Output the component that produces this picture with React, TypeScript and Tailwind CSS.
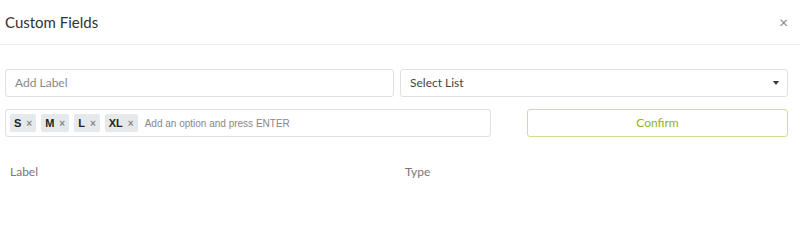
import React from "react";

const Chip = ({ label }: { label: string }) => (
  <span
    className="flex h-[18px] items-center gap-[5px] rounded-[2px] bg-[#e6e9ec] px-[4px] text-[11px] font-bold text-[#222]"
    style={{ fontFamily: "'Liberation Sans', Arial, sans-serif" }}
  >
    <span>{label}</span>
    <span className="text-[10px] font-bold text-[#888]">×</span>
  </span>
);

export default function App() {
  return (
    <div className="h-[200px] w-[800px] bg-white" style={{ fontFamily: "Lato, 'Liberation Sans', sans-serif" }}>
      <div className="flex h-[45px] items-center justify-between border-b border-[#eeeeee] pl-[5px] pr-[12px]">
        <span className="text-[15px] text-[#333]">Custom Fields</span>
        <span className="text-[15px] leading-none text-[#888]">×</span>
      </div>
      <div className="pl-[5px] pr-[12px] pt-[24px]">
        <div className="flex gap-[6px]">
          <div className="flex h-[28px] flex-1 items-center rounded-[3px] border border-[#e0e0e0] px-[9px] text-[12px] text-[#888]">
            Add Label
          </div>
          <div className="flex h-[28px] flex-1 items-center justify-between rounded-[3px] border border-[#e0e0e0] pl-[9px] pr-[8px] text-[12px] text-[#444]">
            <span>Select List</span>
            <svg width="6" height="4" viewBox="0 0 6 4"><path d="M0 0h6L3 4z" fill="#333" /></svg>
          </div>
        </div>
        <div className="mt-[12px] flex gap-[36px]">
          <div className="flex h-[28px] w-[486px] items-center gap-[5px] rounded-[3px] border border-[#e0e0e0] pl-[4px]">
            <Chip label="S" />
            <Chip label="M" />
            <Chip label="L" />
            <Chip label="XL" />
            <span className="ml-[2px] text-[10px] text-[#888]" style={{ fontFamily: "'Liberation Sans', Arial, sans-serif" }}>
              Add an option and press ENTER
            </span>
          </div>
          <div className="flex h-[28px] flex-1 items-center justify-center rounded-[3px] border border-[#cfe08c] text-[12px] text-[#8fb521]">
            Confirm
          </div>
        </div>
        <div className="mt-[26px] flex text-[12px] text-[#777]">
          <span className="w-[395px] pl-[5px]">Label</span>
          <span className="pl-[5px]">Type</span>
        </div>
      </div>
    </div>
  );
}
